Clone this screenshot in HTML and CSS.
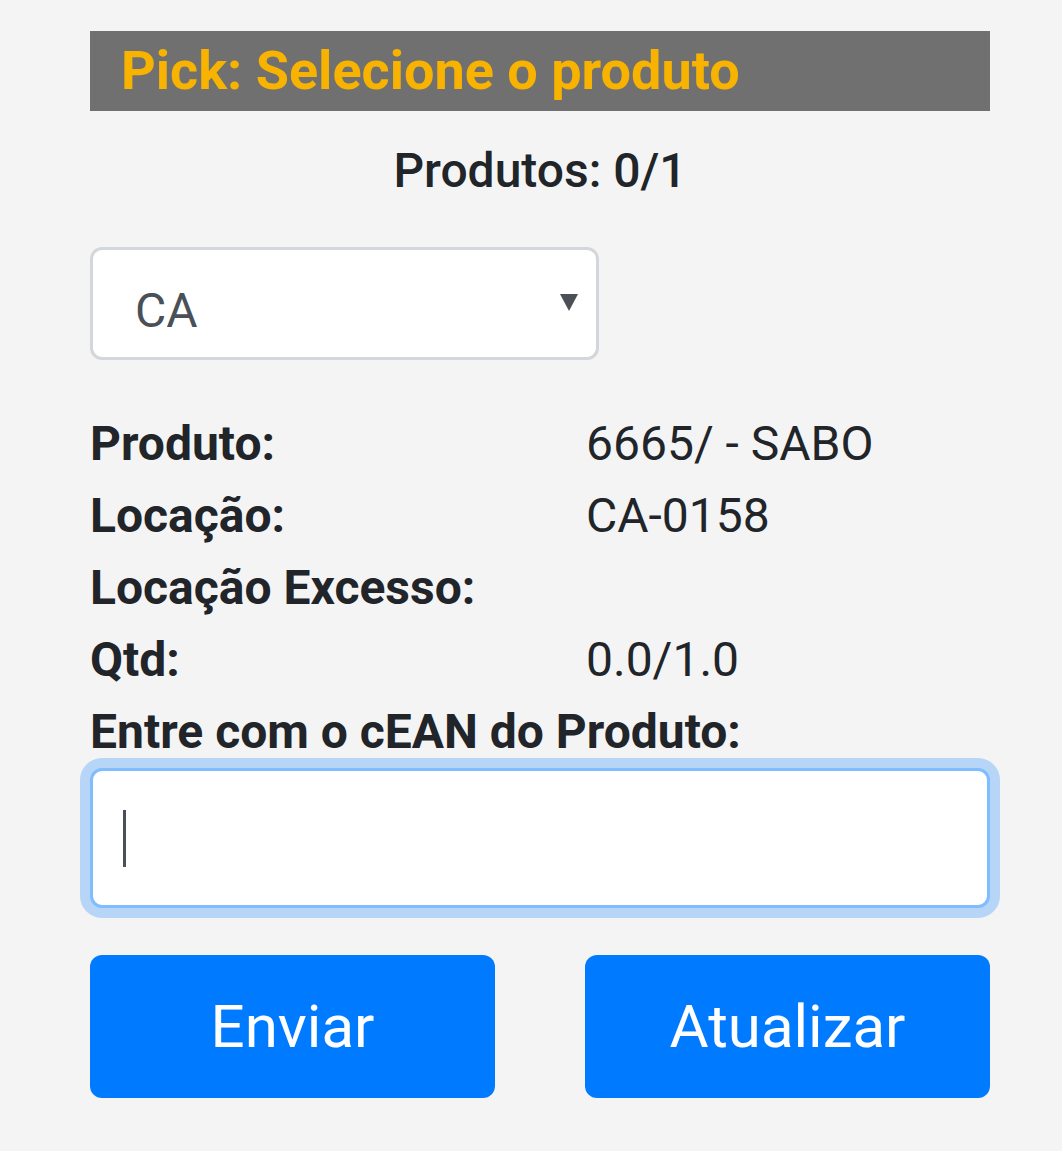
FILE: index.html
```html
<!DOCTYPE html>
<html lang="pt">
<head>
<meta charset="utf-8">
<link rel="stylesheet" href="styles.css">
</head>
<body>
<div class="container">
  <div class="title-bar"><h1 class="title">Pick: Selecione o produto</h1></div>
  <div class="counter">Produtos: 0/1</div>
  <div class="select">
    <span class="select-value">CA</span>
    <span class="select-arrow"></span>
  </div>
  <div class="info">
    <div class="label">Produto:</div><div class="value">6665/ - SABO</div>
    <div class="label">Locação:</div><div class="value">CA-0158</div>
    <div class="label">Locação Excesso:</div><div class="value"></div>
    <div class="label">Qtd:</div><div class="value">0.0/1.0</div>
  </div>
  <div class="label prompt">Entre com o cEAN do Produto:</div>
  <div class="input"><span class="caret"></span></div>
  <div class="actions">
    <button class="btn">Enviar</button>
    <button class="btn">Atualizar</button>
  </div>
</div>
</body>
</html>
```
FILE: styles.css
```css
html, body {
  margin: 0;
  padding: 0;
  background: #f4f4f4;
  font-family: Roboto, "Liberation Sans", sans-serif;
  color: #212529;
}
.container {
  width: 900px;
  margin-left: 90px;
  padding-top: 31px;
  padding-bottom: 53px;
}
.title-bar {
  height: 80px;
  background: #707070;
  display: flex;
  align-items: center;
  padding-left: 31px;
}
.title {
  margin: 0;
  font-size: 54px;
  font-weight: 700;
  color: #f8b200;
  line-height: 1;
}
.counter {
  text-align: center;
  font-size: 48px;
  font-weight: 500;
  line-height: 72px;
  margin-top: 24px;
}
.select {
  margin-top: 40px;
  width: 509px;
  height: 113px;
  box-sizing: border-box;
  border: 3px solid #d3d7dc;
  border-radius: 12px;
  background: #fff;
  display: flex;
  align-items: center;
  padding: 14px 16px 0 42px;
  justify-content: space-between;
}
.select-value {
  font-size: 48px;
  color: #495057;
}
.select-arrow {
  width: 0;
  height: 0;
  border-left: 9px solid transparent;
  border-right: 9px solid transparent;
  border-top: 17px solid #4a5056;
  margin-bottom: 16px;
  margin-right: 2px;
}
.info {
  margin-top: 48px;
  display: grid;
  grid-template-columns: 496px 1fr;
}
.label {
  font-size: 48px;
  font-weight: 700;
  line-height: 72px;
}
.value {
  font-size: 48px;
  line-height: 72px;
}
.input {
  margin-top: 0;
  height: 140px;
  box-sizing: border-box;
  border: 3px solid #80bdff;
  border-radius: 12px;
  background: #fff;
  box-shadow: 0 0 0 10px rgba(0, 123, 255, 0.25);
  display: flex;
  align-items: center;
  padding-left: 30px;
}
.caret {
  width: 3px;
  height: 57px;
  background: #495057;
}
.actions {
  margin-top: 47px;
  display: grid;
  grid-template-columns: 1fr 1fr;
  column-gap: 90px;
}
.btn {
  height: 143px;
  border: none;
  border-radius: 12px;
  background: #007bff;
  color: #fff;
  font-family: Roboto, "Liberation Sans", sans-serif;
  font-size: 60px;
  padding: 0;
}
```
